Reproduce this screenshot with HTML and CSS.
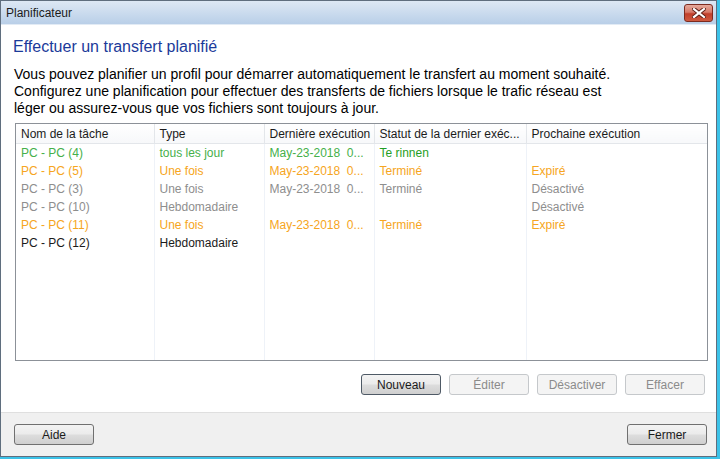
FILE: index.html
```html
<!DOCTYPE html>
<html lang="fr">
<head>
    <meta charset="UTF-8">
    <meta name="viewport" content="width=device-width, initial-scale=1.0">
    <title>Planificateur</title>
    <link rel="stylesheet" href="styles.css">
</head>
<body>
    <div class="window">
        <div class="titlebar">
            <span class="title">Planificateur</span>
            <button class="close" title="Fermer">
                <svg width="14" height="10" viewBox="0 0 14 10">
                    <path d="M2 1 L12 9 M12 1 L2 9" stroke="#5a1d14" stroke-width="4" stroke-linecap="square"/>
                    <path d="M2 1 L12 9 M12 1 L2 9" stroke="#ffffff" stroke-width="2.2" stroke-linecap="square"/>
                </svg>
            </button>
        </div>

        <div class="content">
            <h1>Effectuer un transfert planifié</h1>
            <p class="intro">Vous pouvez planifier un profil pour démarrer automatiquement le transfert au moment souhaité.<br>
            Configurez une planification pour effectuer des transferts de fichiers lorsque le trafic réseau est<br>
            léger ou assurez-vous que vos fichiers sont toujours à jour.</p>

            <div class="list">
                <table>
                    <colgroup>
                        <col class="c-name">
                        <col class="c-type">
                        <col class="c-last">
                        <col class="c-status">
                        <col>
                    </colgroup>
                    <thead>
                        <tr>
                            <th>Nom de la tâche</th>
                            <th>Type</th>
                            <th>Dernière exécution</th>
                            <th>Statut de la dernier exéc...</th>
                            <th>Prochaine exécution</th>
                        </tr>
                    </thead>
                    <tbody>
                        <tr class="running">
                            <td>PC - PC (4)</td>
                            <td>tous les jour</td>
                            <td>May-23-2018&nbsp; 0...</td>
                            <td class="status-run">Te rinnen</td>
                            <td></td>
                        </tr>
                        <tr class="expired">
                            <td>PC - PC (5)</td>
                            <td>Une fois</td>
                            <td>May-23-2018&nbsp; 0...</td>
                            <td>Terminé</td>
                            <td>Expiré</td>
                        </tr>
                        <tr class="disabled">
                            <td>PC - PC (3)</td>
                            <td>Une fois</td>
                            <td>May-23-2018&nbsp; 0...</td>
                            <td>Terminé</td>
                            <td>Désactivé</td>
                        </tr>
                        <tr class="disabled">
                            <td>PC - PC (10)</td>
                            <td>Hebdomadaire</td>
                            <td></td>
                            <td></td>
                            <td>Désactivé</td>
                        </tr>
                        <tr class="expired">
                            <td>PC - PC (11)</td>
                            <td>Une fois</td>
                            <td>May-23-2018&nbsp; 0...</td>
                            <td>Terminé</td>
                            <td>Expiré</td>
                        </tr>
                        <tr>
                            <td>PC - PC (12)</td>
                            <td>Hebdomadaire</td>
                            <td></td>
                            <td></td>
                            <td></td>
                        </tr>
                        <tr class="filler">
                            <td></td><td></td><td></td><td></td><td></td>
                        </tr>
                    </tbody>
                </table>
            </div>

            <div class="actions">
                <button class="btn default">Nouveau</button>
                <button class="btn" disabled>Éditer</button>
                <button class="btn" disabled>Désactiver</button>
                <button class="btn" disabled>Effacer</button>
            </div>
        </div>

        <div class="footer">
            <button class="btn">Aide</button>
            <button class="btn">Fermer</button>
        </div>
    </div>
</body>
</html>
```

FILE: styles.css
```css
html, body {
    margin: 0;
    padding: 0;
}
body {
    width: 720px;
    height: 459px;
    background: #3cc2e8;
    font-family: "Liberation Sans", Arial, sans-serif;
    overflow: hidden;
}
.window {
    width: 715px;
    height: 455px;
    border: 1px solid #5f6e7e;
    display: flex;
    flex-direction: column;
    background: #ffffff;
}
.titlebar {
    height: 23px;
    display: flex;
    align-items: center;
    justify-content: space-between;
    padding: 0 3px 0 5px;
    background: linear-gradient(#dde8f4, #b9cfe8);
    border-bottom: 1px solid #e2ebf5;
}
.title {
    font-size: 12px;
    color: #1b1b1b;
}
.close {
    width: 29px;
    height: 18px;
    margin-top: 1px;
    padding: 0;
    border: 1px solid #7c2b20;
    border-radius: 3px;
    background: linear-gradient(#e5a99c 0%, #d77a69 45%, #c13f2b 55%, #cf5a40 100%);
    display: flex;
    align-items: center;
    justify-content: center;
}
.content {
    flex: 1;
    padding: 12px 10px 0 12px;
    display: flex;
    flex-direction: column;
}
h1 {
    margin: 0 0 9px 0;
    font-size: 16px;
    line-height: 20px;
    font-weight: normal;
    color: #1b3a9a;
}
.intro {
    margin: 0 0 6px 1px;
    font-size: 14px;
    line-height: 17px;
    color: #000000;
}
.list {
    margin-left: 2px;
    width: 691px;
    height: 236px;
    border: 1px solid #8c9198;
    overflow: hidden;
}
table {
    width: 100%;
    height: 100%;
    border-collapse: collapse;
    table-layout: fixed;
    font-size: 12px;
}
.c-name { width: 138px; }
.c-type { width: 110px; }
.c-last { width: 110px; }
.c-status { width: 152px; }
th {
    height: 19px;
    padding: 0 1px 0 5px;
    text-align: left;
    font-weight: normal;
    color: #1b1b1b;
    background: linear-gradient(#ffffff, #f7f8fa);
    border-right: 1px solid #e3e6ea;
    border-bottom: 1px solid #e3e6ea;
    white-space: nowrap;
}
th:last-child {
    border-right: none;
}
td {
    height: 18px;
    padding: 0 1px 0 5px;
    color: #1b1b1b;
    border-right: 1px solid #eef2f8;
    white-space: nowrap;
}
td:last-child {
    border-right: none;
}
tr.filler td {
    height: auto;
}
.running td { color: #45b04a; }
.running td.status-run { color: #1f9e24; }
.expired td { color: #f6a521; }
.disabled td { color: #8e8e8e; }
.actions {
    display: flex;
    justify-content: flex-end;
    gap: 8px;
    margin-top: 13px;
    padding-right: 1px;
}
.btn {
    width: 80px;
    height: 21px;
    padding: 0;
    font-family: "Liberation Sans", Arial, sans-serif;
    font-size: 12px;
    color: #1b1b1b;
    border: 1px solid #707070;
    border-radius: 3px;
    background: linear-gradient(#f3f3f3 0%, #ebebeb 48%, #dddddd 52%, #cfcfcf 100%);
}
.btn.default {
    border-color: #4f5a66;
}
.btn:disabled {
    color: #8b8b8b;
    border-color: #c5c8cb;
    background: #f4f4f4;
}
.footer {
    height: 43px;
    border-top: 1px solid #dfdfdf;
    background: #f0f0f0;
    display: flex;
    align-items: center;
    justify-content: space-between;
    padding: 0 9px 0 13px;
}
```
